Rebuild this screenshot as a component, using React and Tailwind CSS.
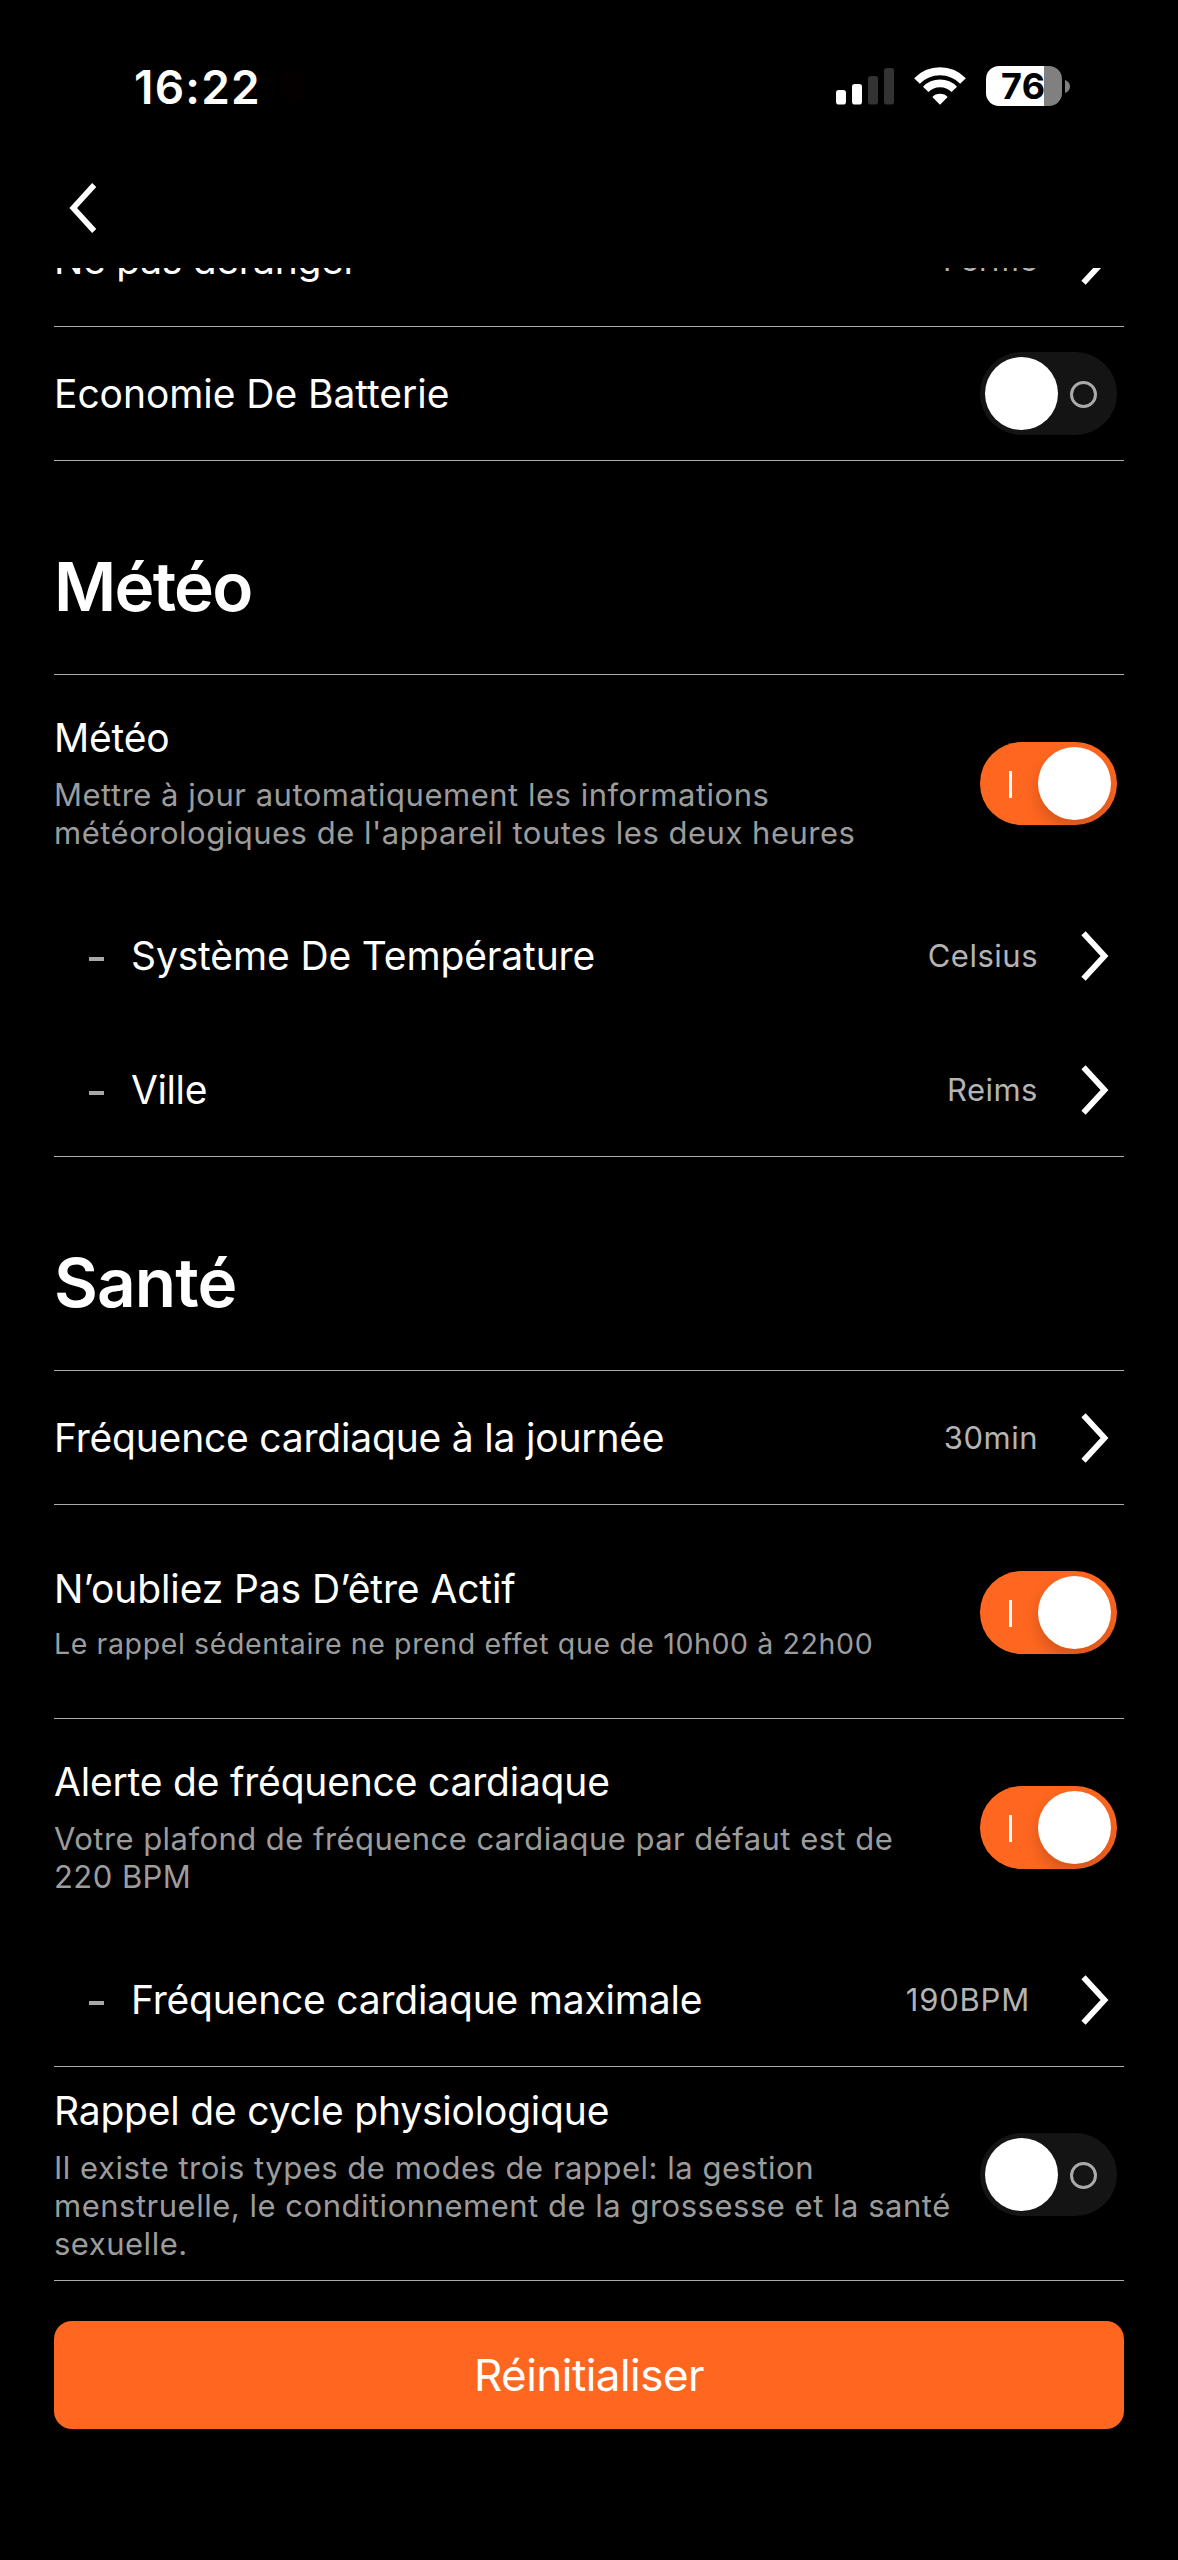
import React, { useState } from 'react';

const ChevronLeft = () => (
  <svg className="w-7 h-[52px]" viewBox="0 0 28 52" fill="none">
    <polyline points="25.2,3 4.2,26 25.2,49" stroke="white" strokeWidth="5.6" />
  </svg>
);

const ChevronRight = () => (
  <svg className="w-[29px] h-[52px] mr-3.5 shrink-0" viewBox="0 0 29 52" fill="none">
    <polyline points="2.5,3.3 23.5,26 2.5,48.7" stroke="white" strokeWidth="5.8" />
  </svg>
);

const StatusBar = () => (
  <div className="flex items-center justify-between h-[172px] pl-[134px] pr-[108px]">
    <div className="flex items-center pt-0.5">
      <span className="text-[46px] leading-[46px] font-semibold tracking-[1.2px]">16:22</span>
      <span className="ml-[17px] w-[27px] h-[30px] rounded-full bg-[#050000]" />
    </div>

    <div className="flex items-center">
      {/* Signal */}
      <svg className="w-[58px] h-10" viewBox="0 0 58 40">
        <rect x="0" y="24" width="10" height="14.5" rx="2.8" fill="white" />
        <rect x="16" y="18" width="10" height="20.5" rx="2.8" fill="white" />
        <rect x="32" y="10" width="10" height="28.5" rx="2.8" fill="#333333" />
        <rect x="48" y="2" width="10" height="36.5" rx="2.8" fill="#333333" />
      </svg>

      {/* Wifi */}
      <svg className="w-[52px] h-10 ml-5" viewBox="0 0 52 40" fill="none">
        <path d="M3 15A32.1 32.1 0 0 1 49 15" stroke="white" strokeWidth="8" />
        <path d="M11.7 23.4A20 20 0 0 1 40.3 23.4" stroke="white" strokeWidth="7.6" />
        <path d="M18.3 31A11 11 0 0 1 33.7 31L26 38.7Z" fill="white" />
      </svg>

      {/* Battery */}
      <div className="flex items-center ml-5">
        <div className="flex items-center w-[76px] h-10 pl-[15px] rounded-[13px] bg-linear-to-r from-white from-[58px] to-[#808080] to-[58px]">
          <span className="text-[36px] leading-10 font-bold tracking-[0.5px] text-black">76</span>
        </div>
        <svg className="w-[5px] h-[13px] ml-[3px]" viewBox="0 0 5 13">
          <path d="M0 0C3 1 5 3.4 5 6.5S3 12 0 13Z" fill="#808080" />
        </svg>
      </div>
    </div>
  </div>
);

const Toggle = ({ defaultOn = false }) => {
  const [on, setOn] = useState(defaultOn);

  return (
    <button
      type="button"
      role="switch"
      aria-checked={on}
      onClick={() => setOn(!on)}
      className={`flex items-center w-[137px] h-[83px] mr-[7px] rounded-full shrink-0 overflow-hidden ${
        on ? 'bg-[#ff6720] pl-[29px]' : 'bg-[#141414] pl-[5px]'
      }`}
    >
      {on ? (
        <>
          <span className="w-[3px] h-[27px] mt-0.5 bg-white" />
          <span className="w-[73px] h-[73px] ml-[26px] rounded-full bg-white shadow-[0_8px_16px_rgba(0,0,0,0.18)]" />
        </>
      ) : (
        <>
          <span className="w-[73px] h-[73px] rounded-full bg-white" />
          <span className="w-[27px] h-[27px] ml-3 mt-0.5 rounded-full border-[3px] border-[#aaaaaa]" />
        </>
      )}
    </button>
  );
};

const SectionTitle = ({ children, className }) => (
  <div className="h-[214px] border-b border-[#acacac] flex items-center pt-[38px]">
    <h2 className={`text-[67.5px] leading-[80px] font-semibold ${className}`}>{children}</h2>
  </div>
);

const LinkRow = ({ title, value, sub, border = true, titleClass = 'tracking-[-0.2px]', valueClass = 'tracking-[0.5px] mr-[43px]' }) => (
  <div className={`h-[134px] flex items-center ${border ? 'border-b border-[#acacac]' : ''}`}>
    {sub && <span className="w-[15px] h-1 mt-1.5 ml-[35px] mr-[27px] bg-[#a8a8a8]" />}
    <span className={`flex-1 text-[39px] leading-[48px] ${titleClass}`}>{title}</span>
    <span className={`text-[31px] leading-[38px] text-[#b4b4b4] ${valueClass}`}>{value}</span>
    <ChevronRight />
  </div>
);

const ToggleRow = ({ title, lines, on, border = true, titleClass = 'tracking-[-0.2px]', descClass = 'text-[31px] leading-[38px] tracking-[0.51px]' }) => (
  <div
    className={`flex items-center justify-between ${lines ? 'h-[214px] pt-0.5' : 'h-[134px]'} ${
      border ? 'border-b border-[#acacac]' : ''
    }`}
  >
    <div>
      <p className={`text-[39px] leading-[48px] ${titleClass}`}>{title}</p>
      {lines && (
        <p className={`mt-3.5 text-[#9c9c9c] whitespace-nowrap ${descClass}`}>
          {lines.map((line) => (
            <span key={line} className="block">{line}</span>
          ))}
        </p>
      )}
    </div>
    <Toggle defaultOn={on} />
  </div>
);

const App = () => {
  return (
    <div className="w-[1178px] h-[2560px] bg-black text-white overflow-hidden font-['Inter','Liberation_Sans',sans-serif]">
      <StatusBar />

      {/* Nav */}
      <div className="flex items-start h-24 pl-[69px] pt-[10px]">
        <button type="button" aria-label="Retour">
          <ChevronLeft />
        </button>
      </div>

      {/* Settings list, scrolled under the nav */}
      <div className="mx-[54px] h-[2014px] overflow-hidden">
        <div className="-mt-[75px]">
          <LinkRow title="Ne pas déranger" value="Fermé" titleClass="tracking-[-0.3px]" />
          <ToggleRow title="Economie De Batterie" titleClass="tracking-[-0.06px]" />

          <SectionTitle className="tracking-[-1.74px]">Météo</SectionTitle>
          <ToggleRow
            title="Météo"
            lines={['Mettre à jour automatiquement les informations', "météorologiques de l'appareil toutes les deux heures"]}
            on
            border={false}
          />
          <LinkRow title="Système De Température" value="Celsius" sub border={false} titleClass="tracking-[-0.14px]" />
          <LinkRow title="Ville" value="Reims" sub titleClass="tracking-[-0.4px]" />

          <SectionTitle className="tracking-[-0.9px]">Santé</SectionTitle>
          <LinkRow title="Fréquence cardiaque à la journée" value="30min" />
          <ToggleRow
            title="N’oubliez Pas D’être Actif"
            titleClass="tracking-[-0.1px]"
            lines={['Le rappel sédentaire ne prend effet que de 10h00 à 22h00']}
            descClass="text-[28.5px] leading-[34px] tracking-[0.62px]"
            on
          />
          <ToggleRow
            title="Alerte de fréquence cardiaque"
            lines={['Votre plafond de fréquence cardiaque par défaut est de', '220 BPM']}
            descClass="text-[31px] leading-[38px] tracking-[0.45px]"
            on
            border={false}
          />
          <LinkRow title="Fréquence cardiaque maximale" value="190BPM" sub valueClass="tracking-[0.8px] mr-[51px]" />
          <ToggleRow
            title="Rappel de cycle physiologique"
            lines={[
              'Il existe trois types de modes de rappel: la gestion',
              'menstruelle, le conditionnement de la grossesse et la santé',
              'sexuelle.',
            ]}
          />
        </div>
      </div>

      <div className="px-[54px] pt-[39px]">
        <button
          type="button"
          className="w-full h-[108px] rounded-[18px] bg-[#ff6720] text-[44px] leading-[54px] tracking-[-0.55px]"
        >
          Réinitialiser
        </button>
      </div>
    </div>
  );
};

export default App;
